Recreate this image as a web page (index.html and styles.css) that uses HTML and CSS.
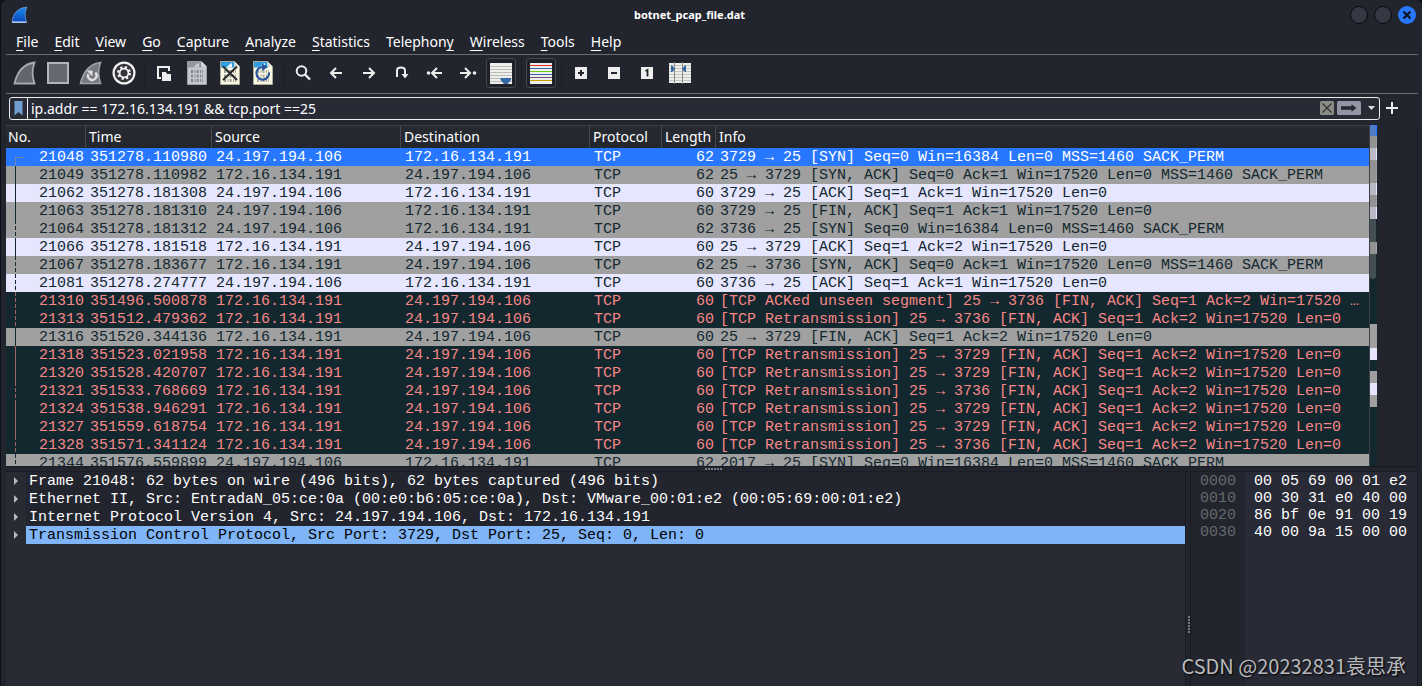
FILE: index.html
```html
<!DOCTYPE html>
<html lang="en">
<head>
<meta charset="utf-8">
<title>botnet_pcap_file.dat</title>
<link rel="stylesheet" href="styles.css">
</head>
<body>
<div class="window">
  <header class="titlebar">
    <svg class="app-icon" width="18" height="18" viewBox="0 0 18 18"><defs><linearGradient id="fin" x1="0" y1="0" x2="0" y2="1"><stop offset="0" stop-color="#1b8af0"/><stop offset="1" stop-color="#0a47b8"/></linearGradient></defs><path d="M1 16C2 8 6 2 16 1C13.500 6 14 11 15.500 16Z" fill="url(#fin)" stroke="#7ba4d8" stroke-width=".7"/><path d="M1 16.200H15.500" stroke="#a8c6ee" stroke-width="1.400"/></svg>
    <h1 class="title">botnet_pcap_file.dat</h1>
    <div class="window-buttons">
      <button class="wbtn" aria-label="Minimize"></button>
      <button class="wbtn" aria-label="Maximize"></button>
      <button class="wbtn close" aria-label="Close"><svg width="18" height="18" viewBox="0 0 18 18"><path d="M5.500 5.500l7 7M12.500 5.500l-7 7" stroke="#0c1224" stroke-width="2.200"/></svg></button>
    </div>
  </header>

  <nav class="menubar">
    <button><u>F</u>ile</button><button><u>E</u>dit</button><button><u>V</u>iew</button><button><u>G</u>o</button><button><u>C</u>apture</button><button><u>A</u>nalyze</button><button><u>S</u>tatistics</button><button>Telephon<u>y</u></button><button><u>W</u>ireless</button><button><u>T</u>ools</button><button><u>H</u>elp</button>
  </nav>

  <div class="toolbar">
    <button aria-label="Start capture"><svg viewBox="0 0 24 24"><path d="M1.500 22.500C4 12 9 3 21.500 1.500C19 8 19 15 21.500 22.500Z" fill="#64666f" stroke="#a8a9ad" stroke-width="1.800"/></svg></button>
    <button aria-label="Stop capture"><svg viewBox="0 0 24 24"><path d="M2 2h20v20H2z" fill="#666872" stroke="#b4b5bc" stroke-width="2"/></svg></button>
    <button aria-label="Restart capture"><svg viewBox="0 0 24 24"><path d="M1.500 22.500C4 12 9 3 21.500 1.500C19 8 19 15 21.500 22.500Z" fill="#777981" stroke="#a0a2a8" stroke-width="1.600"/><path d="M16.300 11.500A4.300 4.300 0 1 1 9.300 13" fill="none" stroke="#e0e0e4" stroke-width="2.400"/><path d="M7.500 9.500h6v6z" fill="#e0e0e4"/></svg></button>
    <button aria-label="Capture options"><svg viewBox="0 0 24 24"><circle cx="12" cy="12" r="11.500" fill="#f2f2f2"/><circle cx="12" cy="12" r="9.300" fill="#34353a"/><circle cx="12" cy="12" r="5.800" fill="none" stroke="#f2f2f2" stroke-width="2.400" stroke-dasharray="2.280 2.280"/><circle cx="12" cy="12" r="4.400" fill="none" stroke="#f2f2f2" stroke-width="1.800"/></svg></button>
    <span class="sep"></span>
    <button aria-label="Open"><svg viewBox="0 0 24 24"><path d="M9 17H6V6h11v4" fill="none" stroke="#eee" stroke-width="2"/><path d="M10 11h4l1 2h4v7h-9z" fill="#eee"/></svg></button>
    <button aria-label="Save"><svg viewBox="0 0 24 24"><path d="M2.500 .5h14l5 5v18h-19z" fill="#c5c7cf" stroke="#9c9ea6"/><path d="M3 1h13.500v5.500H3z" fill="#9698a2"/><path d="M9 6.500q1-3 5-4.500v4.500z" fill="#c9cad1"/><path d="M16.500 .5v5h5z" fill="#d8d9de"/><g fill="none" stroke="#85878f" stroke-width="3" stroke-dasharray="2 1.400 1 1.200"><path d="M6 10.500h12M6 15h12M6 19.500h12"/></g></svg></button>
    <button aria-label="Close file"><svg viewBox="0 0 24 24"><path d="M2.500 .5h14l5 5v18h-19z" fill="#f7f7e2" stroke="#aaa99c"/><path d="M3 1h13.500v5.500H3z" fill="#2f9ee0"/><path d="M9 6.500q1-3 5-4.500v4.500z" fill="#e8f4fb"/><path d="M16.500 .5v5h5z" fill="#dedfd4"/><g fill="none" stroke="#9c9c94" stroke-width="3" stroke-dasharray="2 1.400 1 1.200"><path d="M6 10.500h12M6 15h12M6 19.500h12"/></g><path d="M5 5.500l14 13.500M19 5.500L5 19" stroke="#26282c" stroke-width="2"/></svg></button>
    <button aria-label="Reload file"><svg viewBox="0 0 24 24"><path d="M2.500 .5h14l5 5v18h-19z" fill="#f7f7e2" stroke="#aaa99c"/><path d="M3 1h13.500v5.500H3z" fill="#2f9ee0"/><path d="M9 6.500q1-3 5-4.500v4.500z" fill="#e8f4fb"/><path d="M16.500 .5v5h5z" fill="#dedfd4"/><g fill="none" stroke="#aaa9a0" stroke-width="3" stroke-dasharray="2 1.400 1 1.200"><path d="M6 10.500h12M6 15h12M6 19.500h12"/></g><path d="M11.500 6A6.300 6.300 0 1 0 18 11.500" fill="none" stroke="#2a549c" stroke-width="2.200"/><path d="M11 2.500l6 3.500-6 4z" fill="#2a549c"/></svg></button>
    <span class="sep"></span>
    <button aria-label="Find"><svg viewBox="0 0 24 24"><circle cx="10.500" cy="10" r="4.800" fill="none" stroke="#eee" stroke-width="2"/><path d="M14 13.500l5 5" stroke="#eee" stroke-width="2.400"/></svg></button>
    <button aria-label="Previous packet"><svg viewBox="0 0 24 24"><path d="M7 12h11M12 7l-5 5 5 5" fill="none" stroke="#eee" stroke-width="2"/></svg></button>
    <button aria-label="Next packet"><svg viewBox="0 0 24 24"><path d="M6 12h11M12 7l5 5-5 5" fill="none" stroke="#eee" stroke-width="2"/></svg></button>
    <button aria-label="Go to packet"><svg viewBox="0 0 24 24"><path d="M7 16V9.500Q7 6.500 11 6.500T15 9.500V15" fill="none" stroke="#eee" stroke-width="2"/><path d="M11.500 13h7L15 17.500z" fill="#eee"/></svg></button>
    <button aria-label="First packet"><svg viewBox="0 0 24 24"><circle cx="5.500" cy="12" r="1.800" fill="#eee"/><path d="M9.500 12h9.500M14 7l-5 5 5 5" fill="none" stroke="#eee" stroke-width="2"/></svg></button>
    <button aria-label="Last packet"><svg viewBox="0 0 24 24"><circle cx="18.500" cy="12" r="1.800" fill="#eee"/><path d="M4 12h10.500M9 7l5 5-5 5" fill="none" stroke="#eee" stroke-width="2"/></svg></button>
    <button class="pressed" aria-label="Auto scroll"><svg viewBox="0 0 24 24"><path d="M1 2h22v21H1z" fill="#eeeeec"/><path d="M1 5.500h22M1 8.500h22M1 11.500h22M1 14.500h22M1 17.500h22M1 20.500h22" stroke="#bbbdb7"/><path d="M11.500 17h10.500v2l-3.500 4h-3.500l-3.500-4z" fill="#3667a8"/></svg></button>
    <span class="sep"></span>
    <button class="pressed" aria-label="Colorize"><svg viewBox="0 0 24 24"><path d="M1 2h22v21H1z" fill="#eeeeec"/><path d="M1 4.500h22" stroke="#e02c24"/><path d="M1 7.500h22M1 13.500h22" stroke="#3465a4"/><path d="M1 10.500h22" stroke="#73c716"/><path d="M1 16.500h22" stroke="#75507b"/><path d="M1 19.500h22" stroke="#c8a000"/></svg></button>
    <span class="sep"></span>
    <button aria-label="Zoom in"><svg viewBox="0 0 24 24"><path d="M6 6h12v12H6z" fill="#eee"/><path d="M9 12h6M12 9v6" stroke="#23252e" stroke-width="2"/></svg></button>
    <button aria-label="Zoom out"><svg viewBox="0 0 24 24"><path d="M6 6h12v12H6z" fill="#eee"/><path d="M9 12h6" stroke="#23252e" stroke-width="2"/></svg></button>
    <button aria-label="Normal size"><svg viewBox="0 0 24 24"><path d="M6 6h12v12H6z" fill="#eee"/><path d="M10.500 10l2-1v6.500" fill="none" stroke="#23252e" stroke-width="1.800"/></svg></button>
    <button aria-label="Resize columns"><svg viewBox="0 0 24 24"><path d="M1 2h22v20H1z" fill="#eeeeec"/><path d="M1 4.500h22M1 7.500h22M1 10.500h22M1 13.500h22M1 16.500h22M1 19.500h22" stroke="#c3c5bf"/><path d="M6.500 1v22M14.500 1v22" stroke="#888a85"/><path d="M3 4.500h1L7 8l-3 3H3zM18 4.500h-1L14 8l3 3h1z" fill="#3465a4"/></svg></button>
  </div>

  <div class="filterbar">
    <div class="filterbox">
      <button class="bookmark" aria-label="Bookmarks"><svg width="9" height="15" viewBox="0 0 9 15"><path d="M.5 0h8v14.500L4.500 11 .5 14.500z" fill="#729fcf"/></svg></button>
      <input type="text" aria-label="Display filter" spellcheck="false" value="ip.addr == 172.16.134.191 &amp;&amp; tcp.port ==25">
      <button class="clear" aria-label="Clear"><svg width="14" height="14" viewBox="0 0 14 14"><rect width="14" height="14" rx="1.500" fill="#8a8c85"/><path d="M2.500 2.500l9 9M11.500 2.500l-9 9" stroke="#2e3436" stroke-width="1.200"/></svg></button>
      <button class="apply" aria-label="Apply"><svg width="24" height="14" viewBox="0 0 24 14"><rect width="24" height="14" rx="1.500" fill="#9395a3"/><path d="M4 5.300h10.500V3.200l5 3.800-5 3.800V8.700H4z" fill="#24262e"/></svg></button>
      <button class="drop" aria-label="Recent filters"><svg width="7" height="4" viewBox="0 0 7 4"><path d="M0 0h7L3.500 4z" fill="#ddd"/></svg></button>
    </div>
    <button class="add" aria-label="Add filter button"><svg width="12" height="12" viewBox="0 0 12 12"><path d="M6 0v12M0 6h12" stroke="#eee" stroke-width="2"/></svg></button>
  </div>

  <main class="panes">
    <section class="packet-pane">
      <div class="packet-scroll">
      <table class="packets">
        <colgroup><col class="c-no"><col class="c-time"><col class="c-addr"><col class="c-addr"><col class="c-proto"><col class="c-len"><col></colgroup>
        <thead><tr><th>No.</th><th>Time</th><th>Source</th><th>Destination</th><th>Protocol</th><th>Length</th><th>Info</th></tr></thead>
        <tbody>
        <tr class="selected"><td>21048</td><td>351278.110980</td><td>24.197.194.106</td><td>172.16.134.191</td><td>TCP</td><td>62</td><td>3729 → 25 [SYN] Seq=0 Win=16384 Len=0 MSS=1460 SACK_PERM</td></tr>
        <tr class="gray"><td>21049</td><td>351278.110982</td><td>172.16.134.191</td><td>24.197.194.106</td><td>TCP</td><td>62</td><td>25 → 3729 [SYN, ACK] Seq=0 Ack=1 Win=17520 Len=0 MSS=1460 SACK_PERM</td></tr>
        <tr class="lilac"><td>21062</td><td>351278.181308</td><td>24.197.194.106</td><td>172.16.134.191</td><td>TCP</td><td>60</td><td>3729 → 25 [ACK] Seq=1 Ack=1 Win=17520 Len=0</td></tr>
        <tr class="gray"><td>21063</td><td>351278.181310</td><td>24.197.194.106</td><td>172.16.134.191</td><td>TCP</td><td>60</td><td>3729 → 25 [FIN, ACK] Seq=1 Ack=1 Win=17520 Len=0</td></tr>
        <tr class="gray other"><td>21064</td><td>351278.181312</td><td>24.197.194.106</td><td>172.16.134.191</td><td>TCP</td><td>62</td><td>3736 → 25 [SYN] Seq=0 Win=16384 Len=0 MSS=1460 SACK_PERM</td></tr>
        <tr class="lilac"><td>21066</td><td>351278.181518</td><td>172.16.134.191</td><td>24.197.194.106</td><td>TCP</td><td>60</td><td>25 → 3729 [ACK] Seq=1 Ack=2 Win=17520 Len=0</td></tr>
        <tr class="gray other"><td>21067</td><td>351278.183677</td><td>172.16.134.191</td><td>24.197.194.106</td><td>TCP</td><td>62</td><td>25 → 3736 [SYN, ACK] Seq=0 Ack=1 Win=17520 Len=0 MSS=1460 SACK_PERM</td></tr>
        <tr class="lilac other"><td>21081</td><td>351278.274777</td><td>24.197.194.106</td><td>172.16.134.191</td><td>TCP</td><td>60</td><td>3736 → 25 [ACK] Seq=1 Ack=1 Win=17520 Len=0</td></tr>
        <tr class="bad other"><td>21310</td><td>351496.500878</td><td>172.16.134.191</td><td>24.197.194.106</td><td>TCP</td><td>60</td><td>[TCP ACKed unseen segment] 25 → 3736 [FIN, ACK] Seq=1 Ack=2 Win=17520 …</td></tr>
        <tr class="bad other"><td>21313</td><td>351512.479362</td><td>172.16.134.191</td><td>24.197.194.106</td><td>TCP</td><td>60</td><td>[TCP Retransmission] 25 → 3736 [FIN, ACK] Seq=1 Ack=2 Win=17520 Len=0</td></tr>
        <tr class="gray"><td>21316</td><td>351520.344136</td><td>172.16.134.191</td><td>24.197.194.106</td><td>TCP</td><td>60</td><td>25 → 3729 [FIN, ACK] Seq=1 Ack=2 Win=17520 Len=0</td></tr>
        <tr class="bad"><td>21318</td><td>351523.021958</td><td>172.16.134.191</td><td>24.197.194.106</td><td>TCP</td><td>60</td><td>[TCP Retransmission] 25 → 3729 [FIN, ACK] Seq=1 Ack=2 Win=17520 Len=0</td></tr>
        <tr class="bad"><td>21320</td><td>351528.420707</td><td>172.16.134.191</td><td>24.197.194.106</td><td>TCP</td><td>60</td><td>[TCP Retransmission] 25 → 3729 [FIN, ACK] Seq=1 Ack=2 Win=17520 Len=0</td></tr>
        <tr class="bad other"><td>21321</td><td>351533.768669</td><td>172.16.134.191</td><td>24.197.194.106</td><td>TCP</td><td>60</td><td>[TCP Retransmission] 25 → 3736 [FIN, ACK] Seq=1 Ack=2 Win=17520 Len=0</td></tr>
        <tr class="bad"><td>21324</td><td>351538.946291</td><td>172.16.134.191</td><td>24.197.194.106</td><td>TCP</td><td>60</td><td>[TCP Retransmission] 25 → 3729 [FIN, ACK] Seq=1 Ack=2 Win=17520 Len=0</td></tr>
        <tr class="bad"><td>21327</td><td>351559.618754</td><td>172.16.134.191</td><td>24.197.194.106</td><td>TCP</td><td>60</td><td>[TCP Retransmission] 25 → 3729 [FIN, ACK] Seq=1 Ack=2 Win=17520 Len=0</td></tr>
        <tr class="bad other"><td>21328</td><td>351571.341124</td><td>172.16.134.191</td><td>24.197.194.106</td><td>TCP</td><td>60</td><td>[TCP Retransmission] 25 → 3736 [FIN, ACK] Seq=1 Ack=2 Win=17520 Len=0</td></tr>
        <tr class="gray other"><td>21344</td><td>351576.559899</td><td>24.197.194.106</td><td>172.16.134.191</td><td>TCP</td><td>62</td><td>2017 → 25 [SYN] Seq=0 Win=16384 Len=0 MSS=1460 SACK_PERM</td></tr>
        </tbody>
      </table>
      </div>
      <div class="minimap"><div class="thumb"></div></div>
    </section>

    <div class="hsplit"><span class="dots"></span></div>

    <section class="lower">
      <ul class="tree">
        <li><button aria-label="Expand"></button><span>Frame 21048: 62 bytes on wire (496 bits), 62 bytes captured (496 bits)</span></li>
        <li><button aria-label="Expand"></button><span>Ethernet II, Src: EntradaN_05:ce:0a (00:e0:b6:05:ce:0a), Dst: VMware_00:01:e2 (00:05:69:00:01:e2)</span></li>
        <li><button aria-label="Expand"></button><span>Internet Protocol Version 4, Src: 24.197.194.106, Dst: 172.16.134.191</span></li>
        <li class="current"><button aria-label="Expand"></button><span>Transmission Control Protocol, Src Port: 3729, Dst Port: 25, Seq: 0, Len: 0</span></li>
      </ul>
      <div class="vsplit"><span class="dots"></span></div>
      <div class="hex">
        <pre class="offsets">0000
0010
0020
0030</pre>
        <pre class="bytes">00 05 69 00 01 e2
00 30 31 e0 40 00
86 bf 0e 91 00 19
40 00 9a 15 00 00</pre>
      </div>
    </section>
  </main>
  <div class="watermark">CSDN @20232831袁思承</div>
</div>
</body>
</html>
```
FILE: styles.css
```css
* { box-sizing: border-box; }

body {
  margin: 0;
  background: #0d0f18;
  color: #fff;
  font: 14px/18px "Noto Sans", "Open Sans", sans-serif;
}

button {
  display: flex;
  align-items: center;
  justify-content: center;
  margin: 0;
  padding: 0;
  border: 0;
  background: none;
  color: inherit;
  font: inherit;
}

.window {
  position: relative;
  display: flex;
  flex-direction: column;
  height: 100vh;
  margin-left: 1px;
  padding: 0 4px 0 5px;
  overflow: hidden;
  border-radius: 6px 6px 0 0;
  background: #23252e;
}

.titlebar {
  display: flex;
  align-items: center;
  height: 30px;
  padding: 0 2px 0 5px;
}

.title {
  flex: 1;
  margin: 0;
  font-size: 11px;
  font-weight: 700;
  text-align: center;
}

.window-buttons {
  display: flex;
  gap: 6px;
}

.wbtn {
  width: 18px;
  height: 18px;
  border-radius: 50%;
  background: #343842;
  border: 1px solid #08090c;
}

.wbtn.close {
  border: 0;
  background: #2777ff;
}

.menubar {
  display: flex;
  gap: 16px;
  height: 25px;
  padding: 0 10px;
  border-bottom: 1px solid #6b6c72;
}

.menubar button {
  display: block;
}

.menubar u {
  text-underline-offset: 3px;
}

.toolbar {
  display: flex;
  align-items: center;
  height: 39px;
  padding: 0 3px 2px;
  border-bottom: 1px solid #6b6c72;
}

.toolbar button {
  flex: none;
  width: 33px;
  height: 30px;
  padding-right: 1px;
}

.toolbar svg {
  width: 24px;
  height: 24px;
}

.toolbar .pressed {
  width: 30px;
  margin: 0 2px 0 1px;
  padding: 0;
  border: 1px solid #45474d;
  border-radius: 3px;
  background: #1f2128;
}

.toolbar .sep {
  width: 7px;
  height: 28px;
  background: linear-gradient(#1d1f27, #1d1f27) 3px 0 / 1px 100% no-repeat;
}

.filterbar {
  display: flex;
  align-items: center;
  gap: 5px;
  height: 31px;
  padding: 0 19px 3px 3px;
}

.filterbox {
  display: flex;
  flex: 1;
  align-items: center;
  height: 23px;
  border: 1px solid #eee;
  border-radius: 3px;
  background: #282a36;
}

.bookmark {
  width: 18px;
  height: 21px;
  border-right: 1px solid #eee;
}

.filterbox input {
  flex: 1;
  min-width: 0;
  height: 21px;
  padding: 0 3px;
  border: 0;
  outline: 0;
  background: none;
  color: #fff;
  font: inherit;
}

.clear { margin-right: 3px; }
.drop {
  width: 18px;
  padding-left: 3px;
}
.add { width: 14px; }

.panes {
  display: flex;
  flex: 1;
  flex-direction: column;
  min-height: 0;
}

.packet-pane {
  display: flex;
  flex: 341 1 0;
  min-height: 0;
  border-right: 1px solid #191b22;
}

.packet-scroll {
  flex: 1;
  min-width: 0;
  overflow: hidden;
  border-right: 1px solid #3c3f44;
}

.packets {
  width: 100%;
  table-layout: fixed;
  border-collapse: separate;
  border-spacing: 0;
  font: 15px/16px "Liberation Mono", monospace;
}

.c-no { width: 80px; }
.c-time { width: 126px; }
.c-addr { width: 189px; }
.c-proto { width: 72px; }
.c-len { width: 54px; }

.packets th {
  height: 23px;
  padding: 0 3px;
  border-top: 1px solid #3d4147;
  background: linear-gradient(90deg, transparent calc(100% - 1px), #454950 0), linear-gradient(#272b31, #23272d);
  font: 14px/22px "Noto Sans", "Open Sans", sans-serif;
  text-align: left;
  white-space: nowrap;
}

.packets th:first-child { padding-left: 2px; }
.packets th:last-child { background: linear-gradient(#272b31, #23272d); }

.packets td {
  height: 18px;
  padding: 2px 4px 0;
  overflow: hidden;
  white-space: pre;
}

.packets td:nth-child(1),
.packets td:nth-child(6) {
  padding: 2px 2px 0;
  text-align: right;
}

/* conversation marker in the first column */
.packets td:first-child {
  background: linear-gradient(var(--mark), var(--mark)) 9px 0 / 1px 100% no-repeat;
}

.packets .other td:first-child {
  background: repeating-linear-gradient(var(--mark) 0 4px, transparent 4px 6px) 9px 0 / 1px 100% no-repeat;
}

.packets .selected td:first-child {
  background:
    linear-gradient(var(--mark), var(--mark)) 9px 9px / 1px 9px no-repeat,
    linear-gradient(var(--mark), var(--mark)) 9px 9px / 9px 1px no-repeat;
}

.selected { --mark: #7186ad; background: #2777ff; color: #fff; }
.gray { --mark: #12272e; background: #a0a0a0; color: #12272e; }
.lilac { --mark: #12272e; background: #e7e6ff; color: #12272e; }
.bad { --mark: #a26466; background: #12272e; color: #f78787; }

.minimap {
  width: 7px;
  margin-right: 40px;
  background: linear-gradient(
    #2777ff 11px, #a0a0a0 11px 23px, #e7e6ff 23px 35px, #a0a0a0 35px 58px,
    #e7e6ff 58px 70px, #a0a0a0 70px 82px, #e7e6ff 82px 94px, #12272e 94px 117px,
    #a0a0a0 117px 129px, #12272e 129px 199px, #a0a0a0 199px 223px, #e7e6ff 223px 235px,
    #12272e 235px 246px, #a0a0a0 246px 258px, #e7e6ff 258px 270px, #a0a0a0 270px 282px,
    #12272e 282px);
}

.thumb {
  width: 6px;
  height: 154px;
  border-radius: 3px;
  background: rgba(128, 128, 128, .45);
}

.hsplit {
  display: flex;
  justify-content: center;
  align-items: center;
  height: 6px;
  padding-left: 4px;
  border-top: 1px solid #191b22;
  border-bottom: 1px solid #1b1d24;
}

.dots {
  width: 18px;
  height: 2px;
  background: repeating-linear-gradient(90deg, #777980 0 2px, transparent 2px 3px);
}

.lower {
  display: flex;
  flex: 214 1 0;
  min-height: 0;
  font: 15px/18px "Liberation Mono", monospace;
}

.tree {
  flex: 1;
  min-width: 0;
  margin: 0;
  padding: 0;
  background: #282a34;
  list-style: none;
}

.tree li {
  display: flex;
  height: 18px;
}

.tree li button {
  width: 20px;
}

.tree li button::before {
  content: "";
  border-left: 4px solid #b9babd;
  border-top: 4px solid transparent;
  border-bottom: 4px solid transparent;
}

.tree li span {
  flex: 1;
  padding: 2px 0 0 3px;
  background: #23252e;
  line-height: 16px;
  white-space: pre;
}

.tree .current span {
  background: #7fb5f7;
  color: #000;
}

.vsplit {
  display: flex;
  justify-content: flex-end;
  width: 6px;
  border-left: 1px solid #191b22;
  border-right: 1px solid #191b22;
}

.vsplit .dots {
  width: 2px;
  height: 18px;
  margin-top: 144px;
  background: repeating-linear-gradient(#777980 0 2px, transparent 2px 3px);
}

.hex {
  display: flex;
  width: 227px;
  border-right: 1px solid #191b22;
  line-height: 17px;
}

.hex pre {
  margin: 0;
  font: inherit;
}

.hex .offsets {
  width: 54px;
  padding: 1px 0 0 9px;
  color: #66686d;
}

.hex .bytes {
  flex: 1;
  padding: 1px 0 0 9px;
  background: #282a36;
}

.watermark {
  position: absolute;
  right: 16px;
  bottom: 6px;
  color: #b9babd;
  font: 20px/28px "Noto Sans CJK SC", sans-serif;
  text-shadow: 1px 1px 2px #000;
}
```
